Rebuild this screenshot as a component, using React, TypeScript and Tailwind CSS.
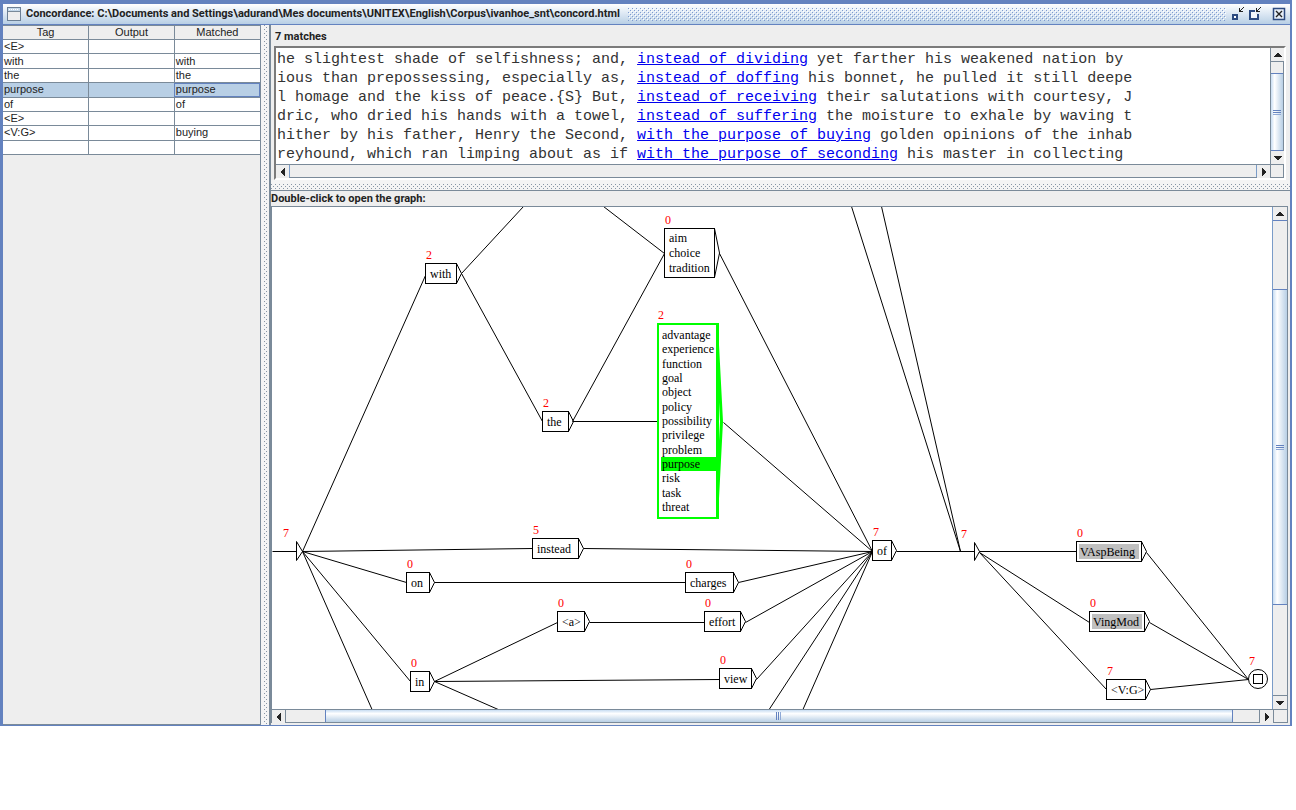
import type { ReactNode } from "react";

type GraphNode = {
  id: string;
  x: number;
  y: number;
  w: number;
  h: number;
  count: number;
  lines: string[];
  kind?: "call" | "active";
};

const VIEW_X = 272;
const VIEW_Y = 207;

const nodes: GraphNode[] = [
  { id: "with", x: 425, y: 263, w: 32, h: 21, count: 2, lines: ["with"] },
  { id: "the", x: 542, y: 411, w: 27, h: 21, count: 2, lines: ["the"] },
  { id: "aim", x: 664, y: 228, w: 51, h: 50, count: 0, lines: ["aim", "choice", "tradition"] },
  {
    id: "advantage",
    x: 657,
    y: 323,
    w: 62,
    h: 196,
    count: 2,
    kind: "active",
    lines: [
      "advantage", "experience", "function", "goal", "object", "policy", "possibility",
      "privilege", "problem", "purpose", "risk", "task", "threat",
    ],
  },
  { id: "instead", x: 532, y: 538, w: 47, h: 21, count: 5, lines: ["instead"] },
  { id: "on", x: 406, y: 572, w: 24, h: 21, count: 0, lines: ["on"] },
  { id: "charges", x: 685, y: 572, w: 49, h: 21, count: 0, lines: ["charges"] },
  { id: "a", x: 557, y: 611, w: 28, h: 21, count: 0, lines: ["<a>"] },
  { id: "effort", x: 704, y: 611, w: 37, h: 21, count: 0, lines: ["effort"] },
  { id: "in", x: 410, y: 671, w: 20, h: 21, count: 0, lines: ["in"] },
  { id: "view", x: 719, y: 668, w: 33, h: 21, count: 0, lines: ["view"] },
  { id: "of", x: 872, y: 540, w: 20, h: 21, count: 7, lines: ["of"] },
  { id: "VAspBeing", x: 1076, y: 541, w: 66, h: 21, count: 0, lines: ["VAspBeing"], kind: "call" },
  { id: "VingMod", x: 1089, y: 611, w: 56, h: 21, count: 0, lines: ["VingMod"], kind: "call" },
  { id: "VG", x: 1106, y: 679, w: 40, h: 21, count: 7, lines: ["<V:G>"] },
];

const freeCounts = [
  { x: 283, y: 526, value: 7 },
  { x: 961, y: 527, value: 7 },
  { x: 1249, y: 654, value: 7 },
];

const edges: [number, number, number, number][] = [
  [272, 551, 296, 551],
  [302, 551, 425, 275],
  [302, 551, 532, 548],
  [302, 551, 406, 582],
  [302, 551, 410, 681],
  [302, 551, 372, 710],
  [461, 273, 523, 206],
  [461, 273, 542, 421],
  [572, 421, 664, 253],
  [572, 421, 657, 421],
  [603, 206, 664, 253],
  [719, 253, 872, 551],
  [723, 422, 872, 551],
  [583, 548, 872, 551],
  [434, 582, 685, 582],
  [738, 582, 872, 551],
  [434, 681, 557, 622],
  [434, 681, 719, 679],
  [434, 681, 500, 710],
  [589, 622, 704, 622],
  [745, 622, 872, 551],
  [756, 679, 872, 551],
  [768, 710, 872, 551],
  [802, 710, 872, 551],
  [896, 551, 974, 551],
  [851, 206, 960, 551],
  [881, 206, 960, 551],
  [979, 551, 1076, 551],
  [979, 552, 1089, 622],
  [979, 552, 1106, 689],
  [1146, 552, 1248, 679],
  [1149, 622, 1248, 679],
  [1150, 689, 1248, 679],
];

const tagRows = [
  ["<E>", "", ""],
  ["with", "", "with"],
  ["the", "", "the"],
  ["purpose", "", "purpose"],
  ["of", "", "of"],
  ["<E>", "", ""],
  ["<V:G>", "", "buying"],
  ["", "", ""],
];

const matches = [
  ["he slightest shade of selfishness; and, ", "instead of dividing", " yet farther his weakened nation by"],
  ["ious than prepossessing, especially as, ", "instead of doffing", " his bonnet, he pulled it still deepe"],
  ["l homage and the kiss of peace.{S} But, ", "instead of receiving", " their salutations with courtesy, J"],
  ["dric, who dried his hands with a towel, ", "instead of suffering", " the moisture to exhale by waving t"],
  ["hither by his father, Henry the Second, ", "with the purpose of buying", " golden opinions of the inhab"],
  ["reyhound, which ran limping about as if ", "with the purpose of seconding", " his master in collecting"],
];

const arrowPaths = {
  up: "M3 0h2v1h1v1h1v1h1v1h-8v-1h1v-1h1v-1h1z",
  down: "M0 0h8v1h-1v1h-1v1h-1v1h-2v-1h-1v-1h-1v-1h-1z",
  left: "M4 0v8h-1v-1h-1v-1h-1v-1h-1v-2h1v-1h1v-1h1v-1z",
  right: "M0 0v8h1v-1h1v-1h1v-1h1v-2h-1v-1h-1v-1h-1v-1z",
};

function ArrowButton({ dir }: { dir: "up" | "down" | "left" | "right" }) {
  const vertical = dir === "up" || dir === "down";
  return (
    <button
      type="button"
      aria-label={`Scroll ${dir}`}
      className="flex size-[13px] shrink-0 items-center justify-center bg-[#eeeeee]"
    >
      <svg width={vertical ? 8 : 4} height={vertical ? 4 : 8} shapeRendering="crispEdges" fill="#222">
        <path d={arrowPaths[dir]} />
      </svg>
    </button>
  );
}

function VerticalThumb({ className }: { className: string }) {
  return (
    <div
      className={`flex flex-col items-center justify-center gap-px border-y border-[#6382bf] bg-linear-to-r from-[#c8ddf2] via-white via-30% to-[#b8cfe5] ${className}`}
    >
      <i className="h-px w-2 bg-[#6382bf]" />
      <i className="h-px w-2 bg-[#6382bf]" />
      <i className="h-px w-2 bg-[#8fa9d6]" />
    </div>
  );
}

function HorizontalThumb({ className }: { className: string }) {
  return (
    <div
      className={`flex items-center justify-center gap-px border-x border-[#6382bf] bg-linear-to-b from-[#c8ddf2] via-white via-30% to-[#b8cfe5] ${className}`}
    >
      <i className="h-2 w-px bg-[#6382bf]" />
      <i className="h-2 w-px bg-[#6382bf]" />
      <i className="h-2 w-px bg-[#8fa9d6]" />
    </div>
  );
}

function Label({ children, className }: { children: ReactNode; className: string }) {
  return (
    <h2 className={`font-["Roboto","Liberation_Sans",sans-serif] text-[11px] font-bold leading-[14px] text-[#222] ${className}`}>
      {children}
    </h2>
  );
}

function TitleBar() {
  return (
    <header className="flex h-[21px] shrink-0 items-center border-b border-[#6382bf] bg-linear-to-b from-white via-[#dbe7f3] to-[#b8cfe5] pl-1 pr-1">
      <svg width="14" height="14" viewBox="0 0 14 14" shapeRendering="crispEdges" className="shrink-0" aria-hidden="true">
        <rect x="0.5" y="0.5" width="13" height="13" rx="1" fill="#eee" stroke="#6b7f95" />
        <rect x="1" y="1" width="12" height="3" fill="#c4d8ea" />
        <path d="M2 2.5h10" stroke="#fff" strokeDasharray="1 1" />
        <path d="M1 4.5h12" stroke="#7a8a99" />
      </svg>
      <h1 className='ml-[5px] shrink-0 whitespace-nowrap font-["Roboto","Liberation_Sans",sans-serif] text-[11px] font-bold leading-4 text-[#222]'>
        Concordance: C:\Documents and Settings\adurand\Mes documents\UNITEX\English\Corpus\ivanhoe_snt\concord.html
      </h1>
      <svg className="ml-2 mr-[5px] h-[13px] min-w-0 flex-1" aria-hidden="true" shapeRendering="crispEdges">
        <defs>
          <pattern id="bumps" width="4" height="4" patternUnits="userSpaceOnUse">
            <rect x="0" y="0" width="1" height="1" fill="#7f9bd0" />
            <rect x="2" y="2" width="1" height="1" fill="#7f9bd0" />
            <rect x="1" y="1" width="1" height="1" fill="#fff" />
            <rect x="3" y="3" width="1" height="1" fill="#fff" />
          </pattern>
        </defs>
        <rect width="100%" height="100%" fill="url(#bumps)" />
      </svg>
      <div className="flex shrink-0 items-center gap-1">
        <button type="button" aria-label="Minimize">
          <svg width="13" height="14" viewBox="0 0 13 14" shapeRendering="crispEdges" fill="none" className="block">
            <rect x="2" y="8" width="4" height="4" stroke="#2c4a80" strokeWidth="2" fill="#fff" />
            <path d="M12.500 0.500l-4 4" stroke="#222" />
            <path d="M8 1h1v3h3v1h-4z" fill="#222" />
          </svg>
        </button>
        <button type="button" aria-label="Maximize">
          <svg width="14" height="14" viewBox="0 0 14 14" shapeRendering="crispEdges" fill="none" className="block">
            <path d="M1 3h6v2h-4v6h6v-4h2v6h-10z" fill="#2c4a80" />
            <path d="M3 5h5v2h1v4h-6z" fill="#f2f6fb" />
            <path d="M12.500 0.500l-4 4" stroke="#222" />
            <path d="M8 1h1v3h3v1h-4z" fill="#222" />
          </svg>
        </button>
        <button type="button" aria-label="Close" className="ml-[6px]">
          <svg width="14" height="14" viewBox="0 0 14 14" fill="none" className="block">
            <rect x="1.500" y="1.500" width="11" height="11" stroke="#2c4a80" strokeWidth="1.500" fill="#e6eef8" />
            <path d="M4 4l6 6M10 4l-6 6" stroke="#222" strokeWidth="1.400" />
          </svg>
        </button>
      </div>
    </header>
  );
}

function Splitter({ vertical }: { vertical?: boolean }) {
  const id = vertical ? "split-v" : "split-h";
  return (
    <div
      role="separator"
      className={
        vertical
          ? "w-[10px] shrink-0 border-r-2 border-[#7a8a99] bg-[#f4f4f4] pl-[3px]"
          : "h-[11px] shrink-0 border-b border-[#7a8a99] bg-[#f4f4f4] pt-1"
      }
    >
      <svg
        className={vertical ? "block h-full w-1" : "block h-[5px] w-full"}
        shapeRendering="crispEdges"
        aria-hidden="true"
      >
        <defs>
          <pattern id={id} width="4" height="4" patternUnits="userSpaceOnUse">
            <rect x="0" y="0" width="1" height="1" fill="#8795a5" />
            <rect x="2" y="2" width="1" height="1" fill="#8795a5" />
          </pattern>
        </defs>
        <rect width="100%" height="100%" fill={`url(#${id})`} />
      </svg>
    </div>
  );
}

function TagTable() {
  return (
    <aside className="w-[258px] shrink-0 border border-l-0 border-[#7a8a99] bg-[#eeeeee]">
      <table className="h-[129px] w-full table-fixed border-collapse text-[11px] leading-[13px] text-[#222]">
        <thead>
          <tr>
            {["Tag", "Output", "Matched"].map((h) => (
              <th
                key={h}
                className="border-b border-r border-[#7a8a99] p-0 text-center font-normal last:border-r-0"
              >
                {h}
              </th>
            ))}
          </tr>
        </thead>
        <tbody>
          {tagRows.map((row, r) => (
            <tr key={r} className={r === 3 ? "bg-[#b8cfe5]" : "bg-white"}>
              {row.map((cell, c) => (
                <td
                  key={c}
                  className={`whitespace-nowrap border-b border-r border-[#7a8a99] p-0 pl-px last:border-r-0 ${
                    r === 3 && c === 2 ? "outline outline-1 -outline-offset-1 outline-[#6382bf]" : ""
                  }`}
                >
                  {cell || "\u00a0"}
                </td>
              ))}
            </tr>
          ))}
        </tbody>
      </table>
    </aside>
  );
}

function Concordance() {
  return (
    <section className="shrink-0 bg-[#eeeeee] pl-[3px] pr-1">
      <Label className="pb-[2px] pl-px pt-[5px]">7 matches</Label>
      <div className="border-2 border-b-white border-l-[#7b7b7b] border-r-white border-t-[#7b7b7b]">
        <div className="flex bg-white">
          <pre className='min-w-0 flex-1 overflow-hidden pl-px pt-[2px] font-["Liberation_Mono",monospace] text-[15px] leading-[19px] text-[#333]'>
            {matches.map(([before, hit, after]) => (
              <div key={before}>
                {before}
                <a href="#graph" className="text-[#0000ee] underline">
                  {hit}
                </a>
                {after}
              </div>
            ))}
          </pre>
          <div className="flex w-[14px] flex-col border-x border-[#7a8a99] bg-[#eeeeee]">
            <ArrowButton dir="up" />
            <div className="flex-[11] border-t border-[#7a8a99]" />
            <VerticalThumb className="flex-[76]" />
            <ArrowButton dir="down" />
          </div>
        </div>
        <div className="flex h-[14px] border-y border-[#7a8a99] bg-[#eeeeee]">
          <ArrowButton dir="left" />
          <div className="flex-1 border-x border-[#7a9cc8]" />
          <ArrowButton dir="right" />
          <div className="w-[14px] border-x border-[#7a8a99]" />
        </div>
      </div>
    </section>
  );
}

function Count({ x, y, value }: { x: number; y: number; value: number }) {
  return (
    <span
      className="absolute text-[12px] leading-[14px] text-[#ff0000]"
      style={{ left: x - VIEW_X, top: y - VIEW_Y }}
    >
      {value}
    </span>
  );
}

const frameStyles = {
  plain: "border border-black bg-white px-1 py-[2px]",
  call: "border border-black bg-white p-[2px]",
  active: "border-2 border-r-[3px] border-[#00ff00] bg-white py-[3px] pl-[2px]",
};

function NodeBox({ node }: { node: GraphNode }) {
  const kind = node.kind ?? "plain";
  return (
    <>
      <Count x={node.x + 1} y={node.y - 15} value={node.count} />
      <div
        className={`absolute flex flex-col text-[12px] text-black ${frameStyles[kind]}`}
        style={{ left: node.x - VIEW_X, top: node.y - VIEW_Y, width: node.w, height: node.h }}
      >
        {node.lines.map((line) => (
          <div
            key={line}
            className={`flex flex-1 items-center whitespace-nowrap leading-[14px] ${
              kind === "call" ? "bg-[#c0c0c0] pl-px" : ""
            } ${kind === "active" ? "pl-px" : ""} ${line === "purpose" ? "bg-[#00ff00]" : ""}`}
          >
            {line}
          </div>
        ))}
      </div>
    </>
  );
}

function GraphCanvas() {
  return (
    <div
      id="graph"
      className='relative min-w-0 flex-1 overflow-hidden bg-white font-["Liberation_Serif",serif]'
    >
      <svg className="absolute inset-0 h-full w-full" aria-hidden="true">
        <g transform="translate(-271.5 -206.5)" stroke="#000" fill="none" strokeWidth="1">
          {edges.map(([x1, y1, x2, y2], i) => (
            <line key={i} x1={x1} y1={y1} x2={x2} y2={y2} />
          ))}
          {nodes.map((n) =>
            n.kind === "active" ? (
              <path
                key={n.id}
                d={`M${n.x + n.w - 3} ${n.y + 2} l5 ${n.h / 2 - 2} l-5 ${n.h / 2 - 2}`}
                stroke="#00ff00"
                strokeWidth="3"
              />
            ) : (
              <path key={n.id} d={`M${n.x + n.w - 1} ${n.y} l5 ${(n.h - 1) / 2} l-5 ${(n.h - 1) / 2}`} />
            ),
          )}
          <path d="M296 541v19l6 -9z" />
          <path d="M974 542v18l5 -9z" />
          <circle cx="1257.500" cy="678.500" r="9.500" />
          <rect x="1253" y="674" width="9" height="9" />
        </g>
      </svg>
      {nodes.map((n) => (
        <NodeBox key={n.id} node={n} />
      ))}
      {freeCounts.map((c) => (
        <Count key={c.x} x={c.x} y={c.y} value={c.value} />
      ))}
    </div>
  );
}

function GraphPane() {
  return (
    <section className="flex min-h-0 flex-1 flex-col bg-[#eeeeee] pb-[2px] pr-[2px]">
      <Label className="pt-px">Double-click to open the graph:</Label>
      <div className="flex min-h-0 flex-1 flex-col border border-b-0 border-[#7a8a99]">
        <div className="flex min-h-0 flex-1">
          <GraphCanvas />
          <div className="flex w-[15px] flex-col border-l border-[#7a9cc8] bg-[#eeeeee]">
            <ArrowButton dir="up" />
            <div className="flex-[68] border-t border-[#6382bf]" />
            <VerticalThumb className="flex-[316]" />
            <div className="flex-[90] border-b border-[#7a8a99]" />
            <ArrowButton dir="down" />
          </div>
        </div>
        <div className="flex h-[14px] border-y border-[#7a8a99] bg-[#eeeeee]">
          <ArrowButton dir="left" />
          <div className="flex-[39] border-l border-[#7a8a99]" />
          <HorizontalThumb className="flex-[908]" />
          <div className="flex-[26] border-r border-[#7a8a99]" />
          <ArrowButton dir="right" />
          <div className="w-[14px] border-l border-[#7a8a99]" />
        </div>
      </div>
    </section>
  );
}

export default function App() {
  return (
    <div className='flex h-screen flex-col bg-white pb-[84px] pr-1 font-["Liberation_Sans",Arial,sans-serif]'>
      <main className="flex min-h-0 flex-1 flex-col border-b border-l-[3px] border-r-2 border-t-4 border-[#6382bf]">
        <TitleBar />
        <div className="flex min-h-0 flex-1 bg-white">
          <TagTable />
          <Splitter vertical />
          <div className="flex min-w-0 flex-1 flex-col">
            <Concordance />
            <Splitter />
            <GraphPane />
          </div>
        </div>
      </main>
    </div>
  );
}
